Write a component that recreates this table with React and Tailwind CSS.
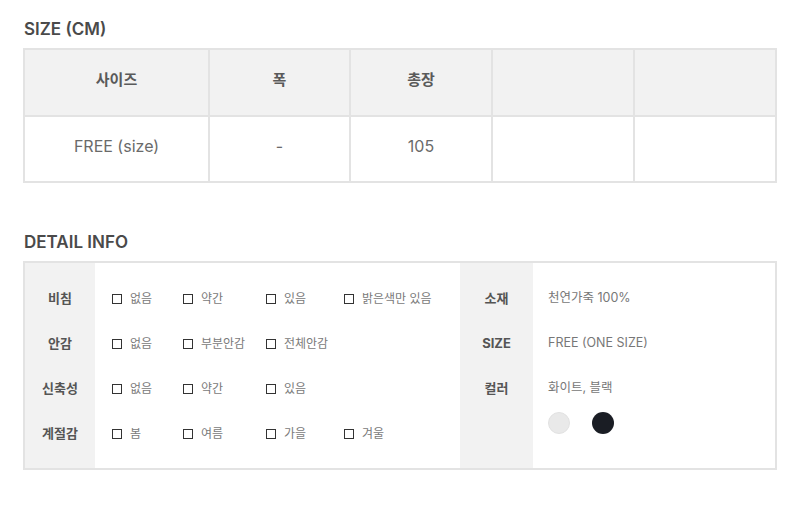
const font = { fontFamily: 'Inter, "Noto Sans CJK KR", sans-serif' };

const sizeCols = [
  { w: 'w-[185px]', head: '사이즈', body: 'FREE (size)' },
  { w: 'w-[141px]', head: '폭', body: '-' },
  { w: 'w-[142px]', head: '총장', body: '105' },
  { w: 'w-[142px]', head: '', body: '' },
  { w: 'w-[142px]', head: '', body: '' },
];

const detailRows = [
  { label: '비침', opts: ['없음', '약간', '있음', '밝은색만 있음'] },
  { label: '안감', opts: ['없음', '부분안감', '전체안감'] },
  { label: '신축성', opts: ['없음', '약간', '있음'] },
  { label: '계절감', opts: ['봄', '여름', '가을', '겨울'] },
];

const optWidths = ['w-[71px]', 'w-[83px]', 'w-[78px]', 'w-auto'];

const Option = ({ text, w }) => (
  <div className={`flex items-center gap-[8px] ${w}`}>
    <span className="w-[10px] h-[10px] border-[1.5px] border-[#333] shrink-0" />
    <span className="text-[12px] text-[#7a7a7a] whitespace-nowrap">{text}</span>
  </div>
);

export default function App() {
  return (
    <div className="w-[800px] h-[520px] bg-white text-[#555]" style={font}>
      <div className="pl-[24px] pt-[19px]">
        <h2 className="text-[17px] leading-[20px] font-semibold text-[#4a4a4a]">SIZE (CM)</h2>
      </div>

      <table className="ml-[23px] mt-[9px] border-collapse border-2 border-[#e3e3e3]">
        <thead>
          <tr className="h-[67px] bg-[#f2f2f2]">
            {sizeCols.map((c, i) => (
              <th key={i} className={`${c.w} pb-[4px] border-2 border-[#e3e3e3] text-[15px] font-semibold text-[#5a5a5a]`}>
                {c.head}
              </th>
            ))}
          </tr>
        </thead>
        <tbody>
          <tr className="h-[66px]">
            {sizeCols.map((c, i) => (
              <td key={i} className="pb-[6px] border-2 border-[#e3e3e3] text-center text-[16px] text-[#6a6a6a]">
                {c.body}
              </td>
            ))}
          </tr>
        </tbody>
      </table>

      <div className="pl-[24px] mt-[49px]">
        <h2 className="text-[17px] leading-[20px] font-semibold text-[#4a4a4a]">DETAIL INFO</h2>
      </div>

      <div className="ml-[23px] mt-[9px] w-[754px] border-2 border-[#e3e3e3] flex">
        <div className="w-[70px] bg-[#f2f2f2] pt-[13px] pb-[12px]">
          {detailRows.map((r) => (
            <div key={r.label} className="h-[45px] flex items-center justify-center text-[13px] font-bold text-[#555]">
              {r.label}
            </div>
          ))}
        </div>
        <div className="w-[365px] pl-[17px] pt-[13px] pb-[12px]">
          {detailRows.map((r) => (
            <div key={r.label} className="h-[45px] flex items-center">
              {r.opts.map((o, i) => (
                <Option key={o + i} text={o} w={optWidths[i]} />
              ))}
            </div>
          ))}
        </div>
        <div className="w-[73px] bg-[#f2f2f2] pt-[13px]">
          {['소재', 'SIZE', '컬러'].map((l) => (
            <div key={l} className="h-[45px] flex items-center justify-center text-[13px] font-bold text-[#555]">
              {l}
            </div>
          ))}
        </div>
        <div className="flex-1 pl-[15px] pt-[13px] text-[12.5px] text-[#777]">
          <div className="h-[45px] flex items-center">천연가죽 100%</div>
          <div className="h-[45px] flex items-center">FREE (ONE SIZE)</div>
          <div className="h-[45px] flex items-center">화이트, 블랙</div>
          <div className="flex gap-[22px] mt-[1px]">
            <span className="w-[22px] h-[22px] rounded-full bg-[#e9e9e9] border border-[#e2e2e2]" />
            <span className="w-[22px] h-[22px] rounded-full bg-[#1a1d24]" />
          </div>
        </div>
      </div>
    </div>
  );
}
